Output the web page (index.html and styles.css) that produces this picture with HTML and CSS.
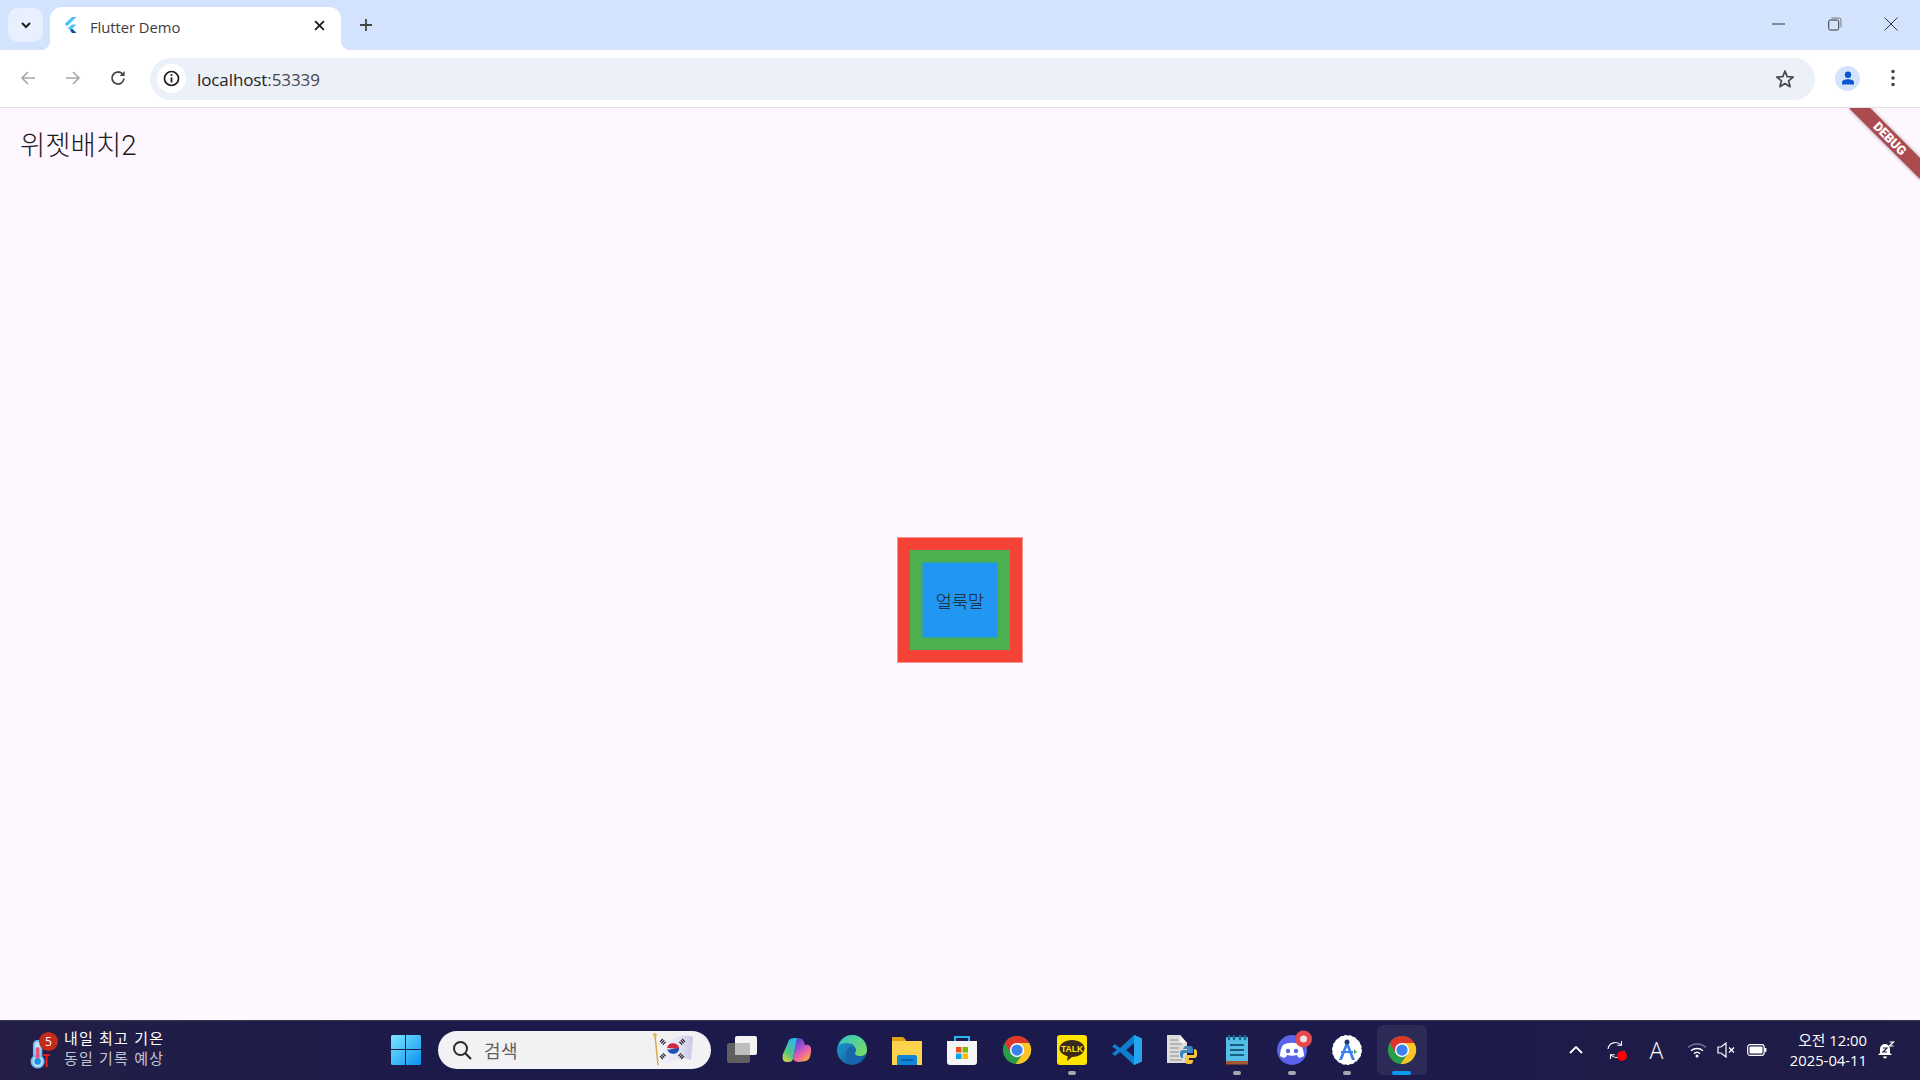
FILE: index.html
```html
<!DOCTYPE html>
<html lang="ko">
<head>
<meta charset="utf-8">
<title>Flutter Demo</title>
<link rel="stylesheet" href="styles.css">
</head>
<body>
<svg class="defs" aria-hidden="true">
  <defs>
    <symbol id="chrome" viewBox="0 0 32 32">
      <circle cx="16" cy="16" r="15" fill="#2a9d48"/>
      <path d="M16 8.500H29A15 15 0 0 1 14.500 30.900L22.500 19.750Z" fill="#fbc525"/>
      <path d="M3 8.500A15 15 0 0 1 29 8.500H16L9.500 19.750Z" fill="#e0352b"/>
      <circle cx="16" cy="16" r="7.600" fill="#fff"/>
      <circle cx="16" cy="16" r="6" fill="#3b82f0"/>
    </symbol>
  </defs>
</svg>
<div class="app">
  <header class="tabstrip">
    <button class="tabsearch"><svg class="i12" viewBox="0 0 12 12"><path d="M2 4l4 4 4-4" fill="none" stroke="#1f1f1f" stroke-width="2"/></svg></button>
    <div class="tab">
      <svg class="favicon" viewBox="0 0 14 16"><path d="M9 0h4.500L4 9.300 1.600 7z" fill="#47c5fb"/><path d="M13.500 7.400H9L5 11.300l2.300 2.300z" fill="#47c5fb"/><path d="M7.300 13.600L9 15.900h4.500L9 11.400z" fill="#00569e"/></svg>
      <span class="tabtitle">Flutter Demo</span>
      <svg class="tabclose" viewBox="0 0 10 10"><path d="M1 1l8 8M9 1l-8 8" stroke="#1f1f1f" stroke-width="1.700"/></svg>
    </div>
    <svg class="newtab" viewBox="0 0 14 14"><path d="M7 1v12M1 7h12" stroke="#444" stroke-width="1.800"/></svg>
    <div class="wincontrols">
      <svg class="winbtn" viewBox="0 0 14 14"><path d="M0 7h13" stroke="#333" stroke-width="1"/></svg>
      <svg class="winbtn" viewBox="0 0 14 14"><rect x=".7" y="3" width="10" height="10" rx="1.600" fill="none" stroke="#333"/><path d="M3.500 1h7.500A2 2 0 0 1 13 3v7.500" fill="none" stroke="#777"/></svg>
      <svg class="winbtn" viewBox="0 0 14 14"><path d="M.5.5l13 13M13.500.5l-13 13" stroke="#333" stroke-width="1"/></svg>
    </div>
  </header>

  <nav class="toolbar">
    <svg class="navicon" viewBox="0 0 18 18"><path d="M16 9H3M9 3L3 9l6 6" fill="none" stroke="#a6a8ab" stroke-width="1.700"/></svg>
    <svg class="navicon" viewBox="0 0 18 18"><path d="M2 9h13M9 3l6 6-6 6" fill="none" stroke="#a6a8ab" stroke-width="1.700"/></svg>
    <svg class="navicon" viewBox="0 0 18 18"><path d="M15 9.500A6 6 0 1 1 13.200 4.700" fill="none" stroke="#474747" stroke-width="1.800"/><path d="M15.600 2v5h-5z" fill="#474747"/></svg>
    <div class="omnibox">
      <span class="infochip"><svg class="i17" viewBox="0 0 17 17"><circle cx="8.500" cy="8.500" r="7" fill="none" stroke="#1f1f1f" stroke-width="1.700"/><path d="M8.500 7.400v5" stroke="#1f1f1f" stroke-width="1.800"/><circle cx="8.500" cy="5" r="1.100" fill="#1f1f1f"/></svg></span>
      <span class="url">localhost<span class="port">:53339</span></span>
      <svg class="star" viewBox="0 0 20 20"><path d="M10 2l2.200 5.600 6 .4-4.600 3.800 1.500 5.900L10 14.500l-5.100 3.200 1.500-5.900L1.800 8l6-.4z" fill="none" stroke="#474747" stroke-width="1.700" stroke-linejoin="round"/></svg>
    </div>
    <span class="avatar"><svg class="i20" viewBox="0 0 20 20"><circle cx="10" cy="6" r="4" fill="#0b57d0"/><path d="M2.500 18v-2.500C2.500 13 6 11.500 10 11.500s7.500 1.500 7.500 4V18z" fill="#0b57d0"/></svg></span>
    <svg class="kebab" viewBox="0 0 4 18"><circle cx="2" cy="2.500" r="1.800" fill="#474747"/><circle cx="2" cy="9" r="1.800" fill="#474747"/><circle cx="2" cy="15.500" r="1.800" fill="#474747"/></svg>
  </nav>

  <main class="page">
    <div class="appbar"><h1 class="apptitle">위젯배치2</h1></div>
    <div class="body">
      <div class="outer"><div class="red"><div class="green"><div class="blue"><div class="bluefill"><span class="label">얼룩말</span></div></div></div></div></div>
    </div>
    <div class="bannerclip"><div class="banner">DEBUG</div></div>
  </main>

  <footer class="taskbar">
    <div class="widget">
      <span class="weather">
        <svg class="thermo" viewBox="0 0 22 32"><rect x="5" y="2" width="8" height="24" rx="4" fill="#bfe0f8" stroke="#6fbcf2" stroke-width="2"/><circle cx="9" cy="24" r="6.500" fill="#bfe0f8" stroke="#6fbcf2" stroke-width="2"/><path d="M9 9v14" stroke="#e8557a" stroke-width="4"/><circle cx="9" cy="24" r="3.500" fill="#1a8fe3"/><path d="M15 17h7M18.500 17v13" stroke="#f01818" stroke-width="2.200"/></svg>
        <span class="badge">5</span>
      </span>
      <div class="widgettext"><span class="w1">내일 최고 기온</span><span class="w2">동일 기록 예상</span></div>
    </div>
    <div class="slot"><svg class="i30" viewBox="0 0 30 30"><defs><linearGradient id="win" x1="0" y1="0" x2="1" y2="1"><stop offset="0" stop-color="#7ce8ff"/><stop offset="1" stop-color="#0a8ff0"/></linearGradient></defs><path d="M0 1.500A1.500 1.500 0 0 1 1.500 0H14v14H0zM15 0h13.500A1.500 1.500 0 0 1 30 1.500V14H15zM0 15h14v15H1.500A1.500 1.500 0 0 1 0 28.500zM15 15h15v13.500a1.500 1.500 0 0 1-1.500 1.500H15z" fill="url(#win)"/></svg></div>
    <div class="search">
      <svg class="searchicon" viewBox="0 0 20 20"><circle cx="8.500" cy="8.500" r="6.500" fill="none" stroke="#2a2a2a" stroke-width="2"/><path d="M13 13l6 6" stroke="#2a2a2a" stroke-width="2.200"/></svg>
      <span class="searchtext">검색</span>
      <svg class="flag" viewBox="0 0 40 36"><defs><linearGradient id="flagbg" x1="0" y1="0" x2="1" y2="0"><stop offset="0" stop-color="#f6f6fb"/><stop offset=".6" stop-color="#e6e6f4"/><stop offset="1" stop-color="#c8c8e6"/></linearGradient></defs><path d="M2 4C10 8 15 9 22 6 28 3 33 3 40 5L38 28C31 25 26 26 20 29 14 32 9 31 4 29z" fill="url(#flagbg)"/><path d="M2 3l3 30" stroke="#d9a94a" stroke-width="1.500"/><circle cx="2" cy="3" r="2" fill="#e8b95a"/><path d="M14 16a6.200 6.200 0 0 1 12.200 1z" fill="#d6263a"/><path d="M14 16c.5 3 3.500 1 6 1s5-2 6.200 0A6.200 6.200 0 0 1 14 16z" fill="#1b4fb5"/><g stroke="#222" stroke-width="4" stroke-dasharray="1.200 .8"><path d="M8 8l4 4M31 8l-4 4M8 26l4-4M30 26l-4-4"/></g></svg>
    </div>
    <div class="slot ml3"><svg class="i30" viewBox="0 0 30 30"><rect x="0" y="8" width="23" height="20" rx="2" fill="#5f5f5f"/><rect x="8" y="1" width="22" height="19" rx="2" fill="#f3f3f3"/><path d="M8 8h15v12H8z" fill="#bdbdbd"/></svg></div>
    <div class="slot"><svg class="i30" viewBox="0 0 30 30"><defs><linearGradient id="cop" x1="0" y1="0" x2="0.600" y2="1"><stop offset="0" stop-color="#2448c8"/><stop offset=".45" stop-color="#a74cd0"/><stop offset=".75" stop-color="#ee6a9c"/><stop offset="1" stop-color="#f9a04a"/></linearGradient><linearGradient id="cop2" x1="0.500" y1="0" x2="0" y2="1"><stop offset="0" stop-color="#2fb8e8"/><stop offset=".55" stop-color="#52c77a"/><stop offset="1" stop-color="#f6d63f"/></linearGradient></defs><path d="M15 3C19 3 21 4 22 7L23 10C27 9 30 11 29 17 28 23 27 25 24 26L17 27C14 27 12 26 11 24Z" fill="url(#cop)"/><path d="M7 5C9 3 13 3 15 3L11 24C10 27 8 27 5 27 1 27 0 24 1 19Z" fill="url(#cop2)"/></svg></div>
    <div class="slot"><svg class="i30" viewBox="0 0 30 30"><defs><linearGradient id="edge" x1="0" y1="0" x2="1" y2="1"><stop offset="0" stop-color="#1f9fd8"/><stop offset="1" stop-color="#10508f"/></linearGradient><linearGradient id="edge2" x1="0" y1="0" x2="1" y2="1"><stop offset="0" stop-color="#36c5c4"/><stop offset="1" stop-color="#7ede5a"/></linearGradient></defs><circle cx="15" cy="15" r="15" fill="url(#edge)"/><path d="M2 10C5 2 12 0 15 0c9 0 15 7 15 15 0 4-3 6-7 6-3 0-6-1-6-3 2-2 2-7-2-9-5-2-10-1-13 1z" fill="url(#edge2)"/><path d="M9 19c0-5 4-8 8-7 2 1 3 3 1 6 0 3 5 5 9 3-3 6-8 8-12 8-4-1-6-6-6-10z" fill="#1a64ad"/></svg></div>
    <div class="slot"><svg class="i30" viewBox="0 0 30 30"><path d="M0 2h11l3 3v22H0z" fill="#e0a010"/><path d="M0 6h30v24H0z" fill="#fdd34d"/><path d="M5 22a2 2 0 0 1 2-2h16a2 2 0 0 1 2 2v8H5z" fill="#0f86d8"/><path d="M9 25h12" stroke="#0a4f96" stroke-width="1.500"/></svg></div>
    <div class="slot"><svg class="i30" viewBox="0 0 30 30"><path d="M8 6V2h14v4" fill="none" stroke="#29b5f0" stroke-width="2"/><path d="M0 6h30v21a3 3 0 0 1-3 3H3a3 3 0 0 1-3-3z" fill="#f5f5f5"/><path d="M9 12h5.500v5.500H9z" fill="#f25022"/><path d="M15.500 12H21v5.500h-5.500z" fill="#7fba00"/><path d="M9 18.500h5.500V24H9z" fill="#00a4ef"/><path d="M15.500 18.500H21V24h-5.500z" fill="#ffb900"/></svg></div>
    <div class="slot"><svg class="i30"><use href="#chrome"/></svg></div>
    <div class="slot dot"><svg class="i30" viewBox="0 0 30 30"><rect width="30" height="30" rx="3" fill="#fde500"/><path d="M15 5c7 0 12.500 3.700 12.500 8.500S22 22 15 22l-5 4 .8-4.800C6 20 2.500 17 2.500 13.500 2.500 8.700 8 5 15 5z" fill="#3b2a1a"/><text class="talk" x="15" y="16.500">TALK</text></svg></div>
    <div class="slot"><svg class="i30" viewBox="0 0 30 30"><path d="M22 0l8 3.500v23L22 30 8 17l-5 4-3-2.500L5 15 0 11.500 3 9l5 4z" fill="#0e7fcf"/><path d="M22 0l8 3.500v23L22 30zM22 8l-8 7 8 7z" fill="#23a5ef"/><path d="M22 8l-8 7 8 7z" fill="#1b1a4c"/></svg></div>
    <div class="slot"><svg class="i30" viewBox="0 0 30 30"><path d="M0 0h13l7 8v20H0z" fill="#dcdcdc"/><path d="M3 5h8M3 9h12M3 13h9M3 17h9M3 21h9M3 25h12" stroke="#a8a8a8" stroke-width="1.500"/><path d="M13 0l7 8h-7z" fill="#f5f5f5"/><path d="M18 11h5a3 3 0 0 1 3 3v4h-8a2 2 0 0 0-2 2v3h-1a3 3 0 0 1-2-3v-2a3 3 0 0 1 3-3h4v-1h-4z" fill="#3f86bf"/><path d="M27 14a3 3 0 0 1 3 3v3a3 3 0 0 1-3 3h-5v2h4v1a3 3 0 0 1-3 3h-2a3 3 0 0 1-3-3v-3a3 3 0 0 1 3-3h6z" fill="#f5c53a"/></svg></div>
    <div class="slot dot"><svg class="i30" viewBox="0 0 30 30"><rect x="4" y="2" width="22" height="26" rx="1" fill="#56bde9"/><path d="M7 1v3M12 1v3M18 1v3M23 1v3" stroke="#16688f" stroke-width="2.500" stroke-linecap="round"/><path d="M8 10h14M8 15h14M8 20h14" stroke="#15607f" stroke-width="2"/><rect x="4" y="26" width="22" height="3.500" fill="#a5562e"/></svg></div>
    <div class="slot dot"><svg class="over" viewBox="0 0 40 36"><circle cx="16" cy="21" r="15" fill="#5a64ea"/><path d="M7 16c5-3 13-3 18 0 2 4 3 7 3 11-3 2-5 2-6 1l-1-2c-3 1-7 1-10 0l-1 2c-2 1-3 1-6-1 0-4 1-8 3-11z" fill="#fff"/><circle cx="12" cy="22" r="2.200" fill="#5a64ea"/><circle cx="20" cy="22" r="2.200" fill="#5a64ea"/><circle cx="27.500" cy="10" r="8.500" fill="#e5484d"/><circle cx="27.500" cy="10" r="3.500" fill="#f3e0e0"/></svg></div>
    <div class="slot dot"><svg class="i30" viewBox="0 0 30 30"><circle cx="15" cy="15" r="14.500" fill="#fff" stroke="#fff" stroke-dasharray="3 2"/><path d="M15 5l-8 20h3l5-13 5 13h3z" fill="#3d7df0"/><path d="M9 17h12" stroke="#3d7df0" stroke-width="2"/><circle cx="15" cy="7" r="2.500" fill="#1e3a6e"/><path d="M22 14l3 3-3 2z" fill="#3ea85a"/></svg></div>
    <div class="slot active"><svg class="i30"><use href="#chrome"/></svg></div>

    <div class="tray">
      <svg class="t-chev" viewBox="0 0 14 8"><path d="M1 7l6-6 6 6" fill="none" stroke="#fff" stroke-width="1.800"/></svg>
      <span class="syncwrap"><svg class="t-sync" viewBox="0 0 20 20"><path d="M2 9a7.500 7.500 0 0 1 13-4M18 11a7.500 7.500 0 0 1-13 4" fill="none" stroke="#fff" stroke-width="1.100"/><path d="M15.500 1v4.300h-4.300M4.500 19v-4.300h4.300" fill="none" stroke="#fff" stroke-width="1.100"/></svg><span class="recdot"></span></span>
      <span class="ime">A</span>
      <svg class="t-wifi" viewBox="0 0 20 16"><path d="M1 5.500a13 13 0 0 1 18 0" fill="none" stroke="#77778c" stroke-width="1.500"/><path d="M4 8.800a9 9 0 0 1 12 0M7 11.600a4.500 4.500 0 0 1 6 0" fill="none" stroke="#fff" stroke-width="1.500"/><circle cx="10" cy="14" r="1.500" fill="#fff"/></svg>
      <svg class="t-mute" viewBox="0 0 20 16"><path d="M1 5h3l5-4v14l-5-4H1z" fill="none" stroke="#fff" stroke-width="1.200"/><path d="M12 5.500l5 5M17 5.500l-5 5" stroke="#fff" stroke-width="1.300"/></svg>
      <svg class="t-batt" viewBox="0 0 20 12"><rect x=".7" y=".7" width="16.500" height="10.600" rx="2.500" fill="none" stroke="#fff" stroke-width="1.200"/><rect x="2.500" y="2.500" width="13" height="7" rx="1" fill="#fff"/><path d="M18.500 4v4" stroke="#fff" stroke-width="1.800"/></svg>
      <div class="clock"><span>오전 12:00</span><span>2025-04-11</span></div>
      <svg class="t-bell" viewBox="0 0 18 18"><path d="M8 3a5 5 0 0 1 5 5v4l2 2H1l2-2V8a5 5 0 0 1 5-5z" fill="#fff"/><path d="M6 15.500h4a2 2 0 0 1-4 0z" fill="#fff"/><path d="M6 7h4l-4 4h4" fill="none" stroke="#1f1c47" stroke-width="1.100"/><path d="M12.500 1h4l-4 4h4" fill="none" stroke="#fff" stroke-width="1.200"/></svg>
    </div>
  </footer>
</div>
</body>
</html>
```

FILE: styles.css
```css
* { box-sizing: border-box; }
html, body { margin: 0; height: 100%; overflow: hidden; }
body { font-family: "Open Sans", "Noto Sans CJK KR", sans-serif; }
.defs { position: absolute; width: 0; height: 0; }
.app { width: 1920px; height: 1080px; display: flex; flex-direction: column; }

/* tab strip */
.tabstrip { height: 50px; flex: none; background: #d3e3fd; display: flex; align-items: flex-start; padding: 8px 0 0 8px; }
.tabsearch { width: 35px; height: 34px; border: 0; border-radius: 10px; background: #e8f0fd; display: flex; align-items: center; justify-content: center; padding: 0; }
.i12 { width: 12px; height: 12px; }
.tab { position: relative; width: 291px; height: 43px; margin: -1px 0 0 7px; background: #fff; border-radius: 12px 12px 0 0; display: flex; align-items: center; padding: 0 0 0 13px; }
.tab::before, .tab::after { content: ""; position: absolute; bottom: 0; width: 10px; height: 10px; background: radial-gradient(circle at 0 0, transparent 10px, #fff 10.5px); }
.tab::before { left: -10px; }
.tab::after { right: -10px; background: radial-gradient(circle at 100% 0, transparent 10px, #fff 10.5px); }
.favicon { width: 14px; height: 16px; margin: -7px 0 0 0; flex: none; }
.tabtitle { font-size: 14.800px; color: #3c3c3c; margin-left: 13px; margin-top: -3px; letter-spacing: -.05px; flex: 1; }
.tabclose { width: 11px; height: 11px; margin: -7px 16px 0 0; }
.newtab { width: 14px; height: 14px; margin: 10px 0 0 18px; }
.wincontrols { margin-left: auto; display: flex; gap: 42px; padding: 9px 22px 0 0; }
.winbtn { width: 14px; height: 14px; }

/* toolbar */
.toolbar { height: 58px; flex: none; background: #fff; border-bottom: 1px solid #e1e1e1; display: flex; align-items: center; padding: 0 10px 0 19px; border-radius: 10px 10px 0 0; }
.navicon { width: 18px; height: 18px; flex: none; margin-right: 27px; margin-top: -2px; }
.omnibox { width: 1665px; margin-left: -4px; margin-right: 20px; height: 42px; border-radius: 21px; background: #ebf0f9; display: flex; align-items: center; padding: 0 20px 0 7px; }
.infochip { width: 29px; height: 29px; border-radius: 50%; background: #fff; display: flex; align-items: center; justify-content: center; flex: none; }
.i17 { width: 17px; height: 17px; }
.url { font-size: 17px; color: #1f1f1f; margin-left: 11px; margin-top: 1px; letter-spacing: -.1px; flex: 1; }
.port { color: #474747; }
.star { width: 20px; height: 20px; }
.avatar { width: 25px; height: 25px; border-radius: 50%; background: #d3e3fd; display: flex; align-items: center; justify-content: center; flex: none; margin-top: -1px; }
.i20 { width: 16px; height: 16px; }
.kebab { width: 4px; height: 18px; margin-left: 31px; margin-top: -2px; flex: none; }

/* page */
.page { flex: 1; min-height: 0; position: relative; background: #fef7ff; display: flex; flex-direction: column; overflow: hidden; font-family: Roboto, "Noto Sans CJK KR", sans-serif; }
.appbar { height: 56px; flex: none; display: flex; align-items: center; padding: 19px 0 0 20px; }
.apptitle { margin: 0; font-size: 27.500px; font-weight: 300; color: #1d1b20; line-height: 1; }
.body { flex: 1; display: flex; align-items: center; justify-content: center; padding-top: 16px; }
.outer { width: 126px; height: 126px; border: 1px solid rgba(244, 67, 54, .55); }
.red { width: 124px; height: 124px; background: #f44336; display: flex; align-items: center; justify-content: center; }
.green { width: 100px; height: 100px; background: #4caf50; display: flex; align-items: center; justify-content: center; }
.blue { width: 76px; height: 76px; border: 1px solid rgba(33, 150, 243, .5); }
.bluefill { width: 74px; height: 74px; background: #2196f3; display: flex; align-items: center; justify-content: center; }
.label { font-size: 17.500px; font-weight: 300; color: #1d1b20; }

/* debug banner */
.bannerclip { position: absolute; top: 0; right: 0; width: 100px; height: 100px; overflow: hidden; pointer-events: none; }
.banner { position: absolute; top: 23px; left: 20px; width: 100px; height: 15px; background: #ab4a4f; color: #fff; font-family: Roboto, sans-serif; font-size: 12.750px; font-weight: 900; line-height: 15px; text-align: center; transform: rotate(45deg); box-shadow: 0 0 4px rgba(0, 0, 0, .4); }

/* taskbar */
.taskbar { height: 60px; flex: none; display: flex; align-items: center; background: linear-gradient(90deg, #221e46 0%, #1c1a4b 25%, #1b1a4c 60%, #201c47 100%); border-top: 1px solid #39374f; padding-bottom: 1px; color: #fff; font-family: "Open Sans", "Noto Sans CJK KR", sans-serif; }
.widget { width: 378px; flex: none; display: flex; align-items: center; padding-left: 29px; }
.weather { position: relative; width: 35px; height: 36px; flex: none; display: block; }
.thermo { position: absolute; left: 0; top: 7px; width: 21px; height: 30px; }
.badge { position: absolute; left: 10px; top: 0; width: 19px; height: 19px; border-radius: 50%; background: #c42b1c; font-size: 12px; line-height: 19px; text-align: center; }
.widgettext { display: flex; flex-direction: column; font-size: 15px; line-height: 20px; letter-spacing: 1.200px; margin-top: -5px; }
.w1 { color: #fff; }
.w2 { color: #c4c4d0; }
.slot { width: 55px; height: 50px; flex: none; display: flex; align-items: center; justify-content: center; position: relative; }
.ml3 { margin-left: 3px; }
.i30 { width: 30px; height: 30px; display: block; }
.over { display: block; overflow: visible; width: 40px; height: 36px; margin: -6px 0 0 8px; }
.talk { font: 700 8.500px "Liberation Sans", sans-serif; fill: #fde500; text-anchor: middle; }
.dot::after { content: ""; position: absolute; bottom: 0; left: 50%; width: 8px; height: 4px; margin-left: -4px; border-radius: 2px; background: #a6a6b0; }
.active::before { content: ""; position: absolute; inset: 0 2.500px; border-radius: 6px; background: rgba(255, 255, 255, .07); }
.active::after { content: ""; position: absolute; bottom: 0; left: 50%; width: 19px; height: 4px; margin-left: -9.500px; border-radius: 2px; background: #0a9af5; }
.active svg { position: relative; }
.search { width: 273px; height: 38px; flex: none; margin-left: 5px; border-radius: 19px; background: #f2f2f4; display: flex; align-items: center; padding: 0 20px 0 14px; }
.searchicon { width: 20px; height: 20px; flex: none; }
.searchtext { font-size: 18px; color: #5e5e5e; margin-left: 12px; margin-top: -1px; flex: 1; letter-spacing: .5px; }
.flag { width: 40px; height: 36px; flex: none; margin-right: -2px; }
.tray { display: flex; align-items: center; position: relative; height: 100%; width: 491px; padding-left: 140px; }
.t-chev { width: 14px; height: 8px; flex: none; }
.syncwrap { position: relative; width: 20px; height: 20px; margin-left: 23px; flex: none; }
.t-sync { width: 20px; height: 20px; display: block; }
.recdot { position: absolute; right: -1px; bottom: -1px; width: 10px; height: 10px; border-radius: 50%; background: #f00; }
.ime { font-size: 23px; font-weight: 300; font-family: "Open Sans", sans-serif; margin-left: 22px; width: 17px; flex: none; text-align: center; line-height: 1; }
.t-wifi { width: 20px; height: 16px; margin-left: 22px; flex: none; }
.t-mute { width: 20px; height: 16px; margin-left: 10px; flex: none; }
.t-batt { width: 20px; height: 12px; margin-left: 10px; flex: none; }
.clock { width: 100px; margin-left: 0; flex: none; display: flex; flex-direction: column; align-items: flex-end; font-size: 14.800px; line-height: 20px; }
.t-bell { width: 18px; height: 18px; margin-left: 10px; flex: none; }
```
